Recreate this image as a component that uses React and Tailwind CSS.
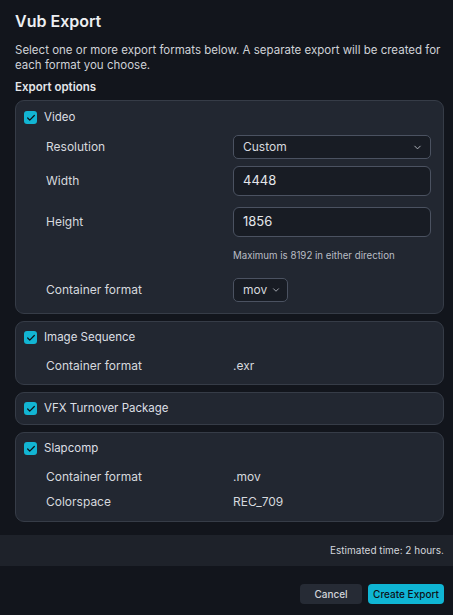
import { ChevronDown, Check } from 'lucide-react'

const FONT = { fontFamily: 'Inter, "Noto Sans", sans-serif' }

function Box({ label, h = 'h-[31px]' }) {
  return (
    <div className={`flex items-center gap-[7px] pl-[8px] ${h}`}>
      <span className="flex h-[13px] w-[13px] items-center justify-center rounded-[3px] bg-[#12b5d3]">
        <Check size={10} strokeWidth={3} className="text-[#0d1117]" />
      </span>
      <span className="text-[11.5px] text-[#dcdfe4]">{label}</span>
    </div>
  )
}

function Row({ label, children, h = 'h-[25px]', className = '' }) {
  return (
    <div className={`grid grid-cols-[187px_198px] items-center pl-[30px] ${h} ${className}`}>
      <span className="text-[12px] text-[#d6d9de]">{label}</span>
      <div className="flex items-center text-[12px] text-[#d6d9de]">{children}</div>
    </div>
  )
}

function Card({ children, className = '' }) {
  return (
    <div className={`rounded-[9px] border border-[#363c47] bg-[#222731] ${className}`}>{children}</div>
  )
}

export default function App() {
  return (
    <div style={FONT} className="h-[615px] w-[453px] bg-[#12151c] text-[#d9dce1]">
      <div className="pl-[15px] pr-[9px] pt-[10px]">
        <h1 className="text-[16px] font-semibold text-[#eceef1] leading-[22px]">Vub Export</h1>
        <p className="mt-[11px] text-[11.5px] leading-[15px] text-[#cfd2d7]">
          Select one or more export formats below. A separate export will be created for each format you choose.
        </p>
        <h2 className="mt-[7px] text-[11.5px] font-semibold leading-[15px] text-[#e4e6ea]">Export options</h2>

        <div className="mt-[5px] flex flex-col gap-[7px]">
          <Card className="pb-[11px]">
            <Box label="Video" h="h-[33px]" />
            <Row label="Resolution" h="h-[24px]" className="mt-[1px]">
              <div className="flex h-[24px] w-full items-center justify-between rounded-[5px] border border-[#4b5261] bg-[#181c24] pl-[9px] pr-[7px]">
                <span>Custom</span>
                <ChevronDown size={11} className="text-[#b8bcc4]" />
              </div>
            </Row>
            <Row label="Width" h="h-[30px]" className="mt-[7px]">
              <div className="flex h-[30px] w-full items-center rounded-[6px] border border-[#4b5261] bg-[#181c24] px-[9px] text-[13px] text-[#e4e6ea]">4448</div>
            </Row>
            <Row label="Height" h="h-[30px]" className="mt-[11px]">
              <div className="flex h-[30px] w-full items-center rounded-[6px] border border-[#4b5261] bg-[#181c24] px-[9px] text-[13px] text-[#e4e6ea]">1856</div>
            </Row>
            <div className="mt-[12px] h-[14px] pl-[217px] text-[9.7px] leading-[14px] text-[#b9bdc4]">Maximum is 8192 in either direction</div>
            <Row label="Container format" h="h-[24px]" className="mt-[15px]">
              <div className="flex h-[24px] items-center gap-[4px] rounded-[5px] border border-[#4b5261] bg-[#181c24] pl-[9px] pr-[6px]">
                <span>mov</span>
                <ChevronDown size={10} className="text-[#b8bcc4]" />
              </div>
            </Row>
          </Card>

          <Card className="pb-[6px]">
            <Box label="Image Sequence" />
            <Row label="Container format">.exr</Row>
          </Card>

          <Card>
            <Box label="VFX Turnover Package" />
          </Card>

          <Card className="pb-[7px]">
            <Box label="Slapcomp" />
            <Row label="Container format">.mov</Row>
            <Row label="Colorspace">REC_709</Row>
          </Card>
        </div>
      </div>

      <div className="mt-[13px] flex h-[31px] items-center justify-end bg-[#1e222a] px-[9px] text-[10px] text-[#d3d6db]">
        Estimated time: 2 hours.
      </div>

      <div className="mt-[18px] flex justify-end gap-[6px] px-[9px]">
        <button className="h-[20px] w-[62px] rounded-[4px] bg-[#262b35] text-[10px] font-medium text-[#d3d6db]">Cancel</button>
        <button className="h-[20px] w-[76px] rounded-[4px] bg-[#0fb5d4] text-[10px] font-medium text-[#0d1117]">Create Export</button>
      </div>
    </div>
  )
}
